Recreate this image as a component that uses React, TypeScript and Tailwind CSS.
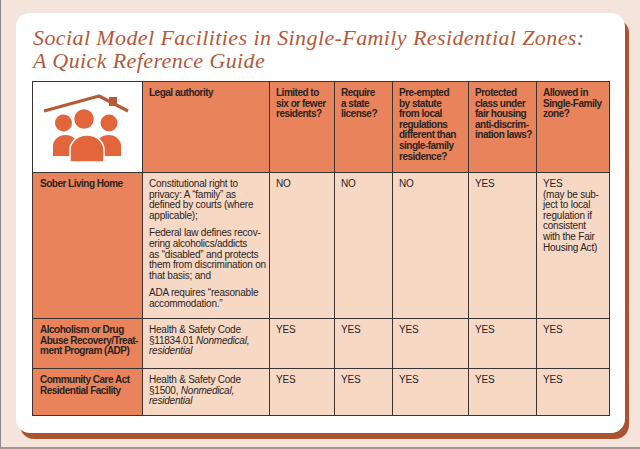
import React from "react";

const body = "font-['Liberation_Sans',Arial,sans-serif] text-[10px] leading-[10.6px] text-[#2a2422] whitespace-nowrap tracking-[-0.22px]";
const head = "bg-[#e8835b] pl-[6px] pt-[6px] font-bold tracking-[-0.5px]";
const label = "bg-[#e8835b] pl-[7px] pt-[6px] font-bold tracking-[-0.5px]";
const cell = "bg-[#f6d8c5] pl-[6px] pt-[6px]";

function FamilyIcon() {
  return (
    <svg width="109" height="90" viewBox="0 0 109 90">
      {/* roof */}
      <rect x="76" y="15" width="8" height="9" fill="#b55b36" />
      <polyline points="11,29 66,14 95,29" fill="none" stroke="#b55b36" strokeWidth="3.2" strokeLinejoin="round" />
      {/* side people */}
      <circle cx="30.5" cy="41" r="8.5" fill="#e2653b" />
      <circle cx="76" cy="41" r="8.5" fill="#e2653b" />
      <path d="M20 74 V64 A12.5 11 0 0 1 45 64 V74 Z" fill="#e2653b" />
      <path d="M63 74 V64 A12.5 11 0 0 1 88 64 V74 Z" fill="#e2653b" />
      {/* center person */}
      <circle cx="51" cy="37" r="10.5" fill="#e2653b" stroke="#fff" strokeWidth="1.5" />
      <path d="M37 80 V68 A17 15 0 0 1 71 68 V80 Z" fill="#e2653b" stroke="#fff" strokeWidth="1.5" />
    </svg>
  );
}

export default function App() {
  return (
    <div className="w-[640px] h-[449px] bg-[#f4e4db] border-l border-[#8a8a8a] border-b-2 border-b-[#9a9a9a] pl-[15px] pt-[13px] overflow-hidden">
      <div className="w-[609px] h-[420px] bg-white rounded-[14px] shadow-[4px_6px_0_#a9532f] pt-[13px] pl-[16px]">
        <h1 className="font-['Liberation_Serif',serif] italic text-[22px] leading-[23px] text-[#b4593b] pl-[1px] tracking-[0.4px]">
          Social Model Facilities in Single-Family Residential Zones:
          <br />
          A Quick Reference Guide
        </h1>

        <div
          className={`mt-[9px] grid grid-cols-[109px_126px_64px_57px_75px_67px_72px] grid-rows-[90px_145px_49px_46px] gap-px bg-[#3b3330] border border-[#3b3330] w-fit ${body}`}
        >
          {/* header row */}
          <div className="bg-white flex items-start">
            <FamilyIcon />
          </div>
          <div className={head}>Legal authority</div>
          <div className={head}>
            Limited to
            <br />
            six or fewer
            <br />
            residents?
          </div>
          <div className={head}>
            Require
            <br />
            a state
            <br />
            license?
          </div>
          <div className={head}>
            Pre-empted
            <br />
            by statute
            <br />
            from local
            <br />
            regulations
            <br />
            different than
            <br />
            single-family
            <br />
            residence?
          </div>
          <div className={head}>
            Protected
            <br />
            class under
            <br />
            fair housing
            <br />
            anti-discrim-
            <br />
            ination laws?
          </div>
          <div className={head}>
            Allowed in
            <br />
            Single-Family
            <br />
            zone?
          </div>

          {/* sober living */}
          <div className={label}>Sober Living Home</div>
          <div className={`${cell} flex flex-col gap-[7px]`}>
            <p>
              Constitutional right to
              <br />
              privacy: A “family” as
              <br />
              defined by courts (where
              <br />
              applicable);
            </p>
            <p>
              Federal law defines recov-
              <br />
              ering alcoholics/addicts
              <br />
              as “disabled” and protects
              <br />
              them from discrimination on
              <br />
              that basis; and
            </p>
            <p>
              ADA requires “reasonable
              <br />
              accommodation.”
            </p>
          </div>
          <div className={cell}>NO</div>
          <div className={cell}>NO</div>
          <div className={cell}>NO</div>
          <div className={cell}>YES</div>
          <div className={cell}>
            YES
            <br />
            (may be sub-
            <br />
            ject to local
            <br />
            regulation if
            <br />
            consistent
            <br />
            with the Fair
            <br />
            Housing Act)
          </div>

          {/* ADP */}
          <div className={label}>
            Alcoholism or Drug
            <br />
            Abuse Recovery/Treat-
            <br />
            ment Program (ADP)
          </div>
          <div className={cell}>
            Health &amp; Safety Code
            <br />
            §11834.01 <i>Nonmedical,</i>
            <br />
            <i>residential</i>
          </div>
          <div className={cell}>YES</div>
          <div className={cell}>YES</div>
          <div className={cell}>YES</div>
          <div className={cell}>YES</div>
          <div className={cell}>YES</div>

          {/* community care */}
          <div className={label}>
            Community Care Act
            <br />
            Residential Facility
          </div>
          <div className={cell}>
            Health &amp; Safety Code
            <br />
            §1500, <i>Nonmedical,</i>
            <br />
            <i>residential</i>
          </div>
          <div className={cell}>YES</div>
          <div className={cell}>YES</div>
          <div className={cell}>YES</div>
          <div className={cell}>YES</div>
          <div className={cell}>YES</div>
        </div>
      </div>
    </div>
  );
}
